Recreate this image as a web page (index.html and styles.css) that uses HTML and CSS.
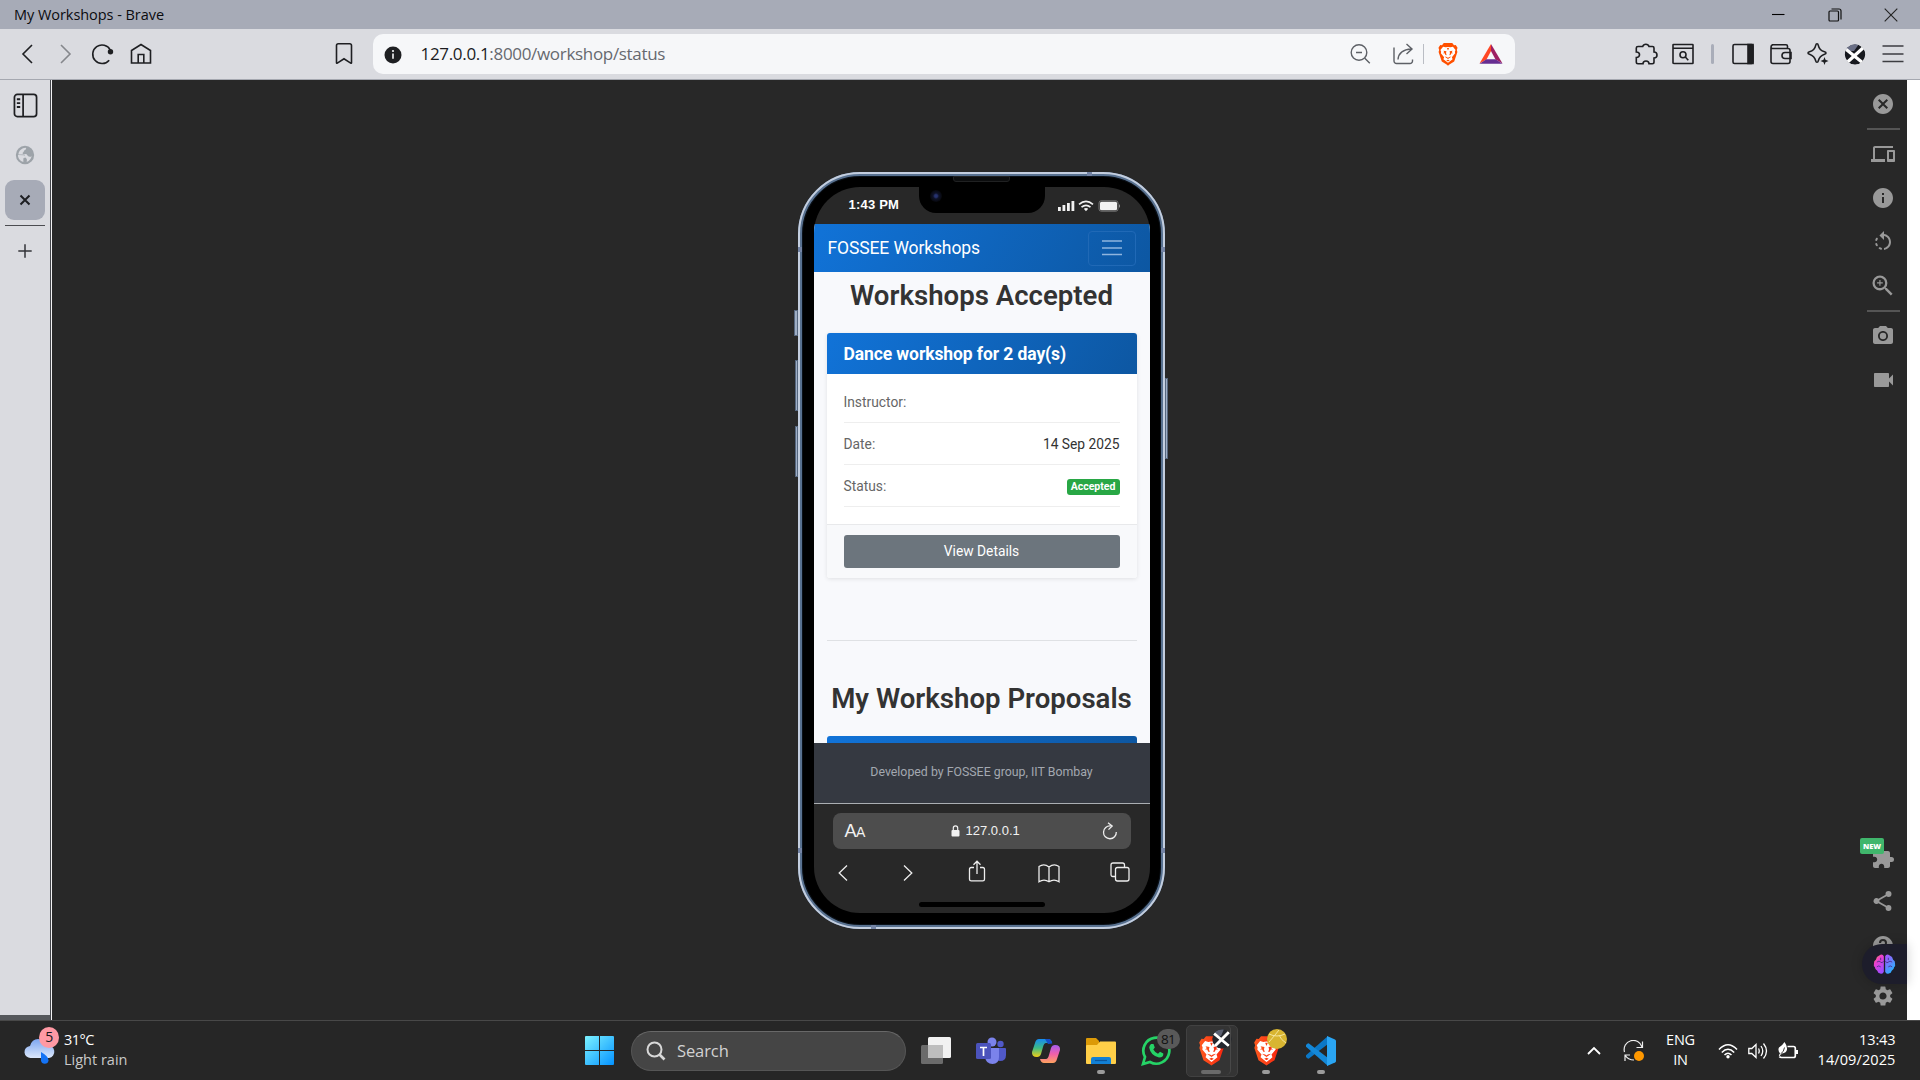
FILE: index.html
```html
<!DOCTYPE html>
<html lang="en">
<head>
<meta charset="utf-8">
<title>My Workshops - Brave</title>
<link rel="stylesheet" href="styles.css">
</head>
<body>
<svg class="defs" width="0" height="0" aria-hidden="true">
  <defs>
    <linearGradient id="orange" x1="0" y1="0" x2="1" y2="0"><stop offset="0" stop-color="#ff5a1f"/><stop offset="1" stop-color="#f7260f"/></linearGradient>
    <symbol id="lion" viewBox="0 0 28 34">
      <path d="M8 1.500h12l2.500 3 2.500-.3 2.500 4-1 3 .8 3-4.500 13.500L16 32l-2 1.500L12 32l-6.800-4.300L.7 14.200l.8-3-1-3 2.500-4 2.500.3z"/>
      <path fill="#fff" d="M14 7l3.500.6 3.500-.9 3.700 4.500-1 2.600.4 2.200-4.600 5.500 1 3L14 29.500l-6.500-5 1-3-4.600-5.500.4-2.200-1-2.600L7 6.700l3.500.9z"/>
      <path d="M7.500 12.300l4.300.9-.6 2.300.9 3.200-1.600-.2-1.300-2.700H6.800l2-1.200zM20.500 12.300l-4.300.9.600 2.300-.9 3.200 1.600-.2 1.300-2.700h2.400l-2-1.200zM9 20.500l3.500.8L14 22.500l1.500-1.200 3.500-.8-3 2.200-2 1.500-2-1.500zM11.500 26l2.500-1 2.500 1-2.500 1.700zM12.500 8.500h3L14 12z"/>
    </symbol>
    <clipPath id="disc"><circle cx="12" cy="12.500" r="10.300"/></clipPath>
    <clipPath id="badge"><circle cx="10" cy="10" r="9.800"/></clipPath>
  </defs>
</svg>

<header class="titlebar">
  <span class="window-title">My Workshops - Brave</span>
  <div class="window-buttons">
    <svg width="14" height="14" viewBox="0 0 14 14"><path d="M1 6.500h12.500" stroke="#000" stroke-width="1.100"/></svg>
    <svg width="14" height="14" viewBox="0 0 14 14" fill="none" stroke="#111" stroke-width="1.200"><rect x="1" y="3" width="9.500" height="10" rx="1"/><path d="M3.500 1h7.500a2 2 0 0 1 2 2v8.500"/></svg>
    <svg width="14" height="14" viewBox="0 0 14 14"><path d="M.7.700l12.600 12.600M13.300.700L.7 13.300" stroke="#222" stroke-width="1.100"/></svg>
  </div>
</header>

<nav class="toolbar">
  <svg class="tool back" viewBox="0 0 24 24"><path d="M16 3L7 12l9 9"/></svg>
  <svg class="tool forward" viewBox="0 0 24 24"><path d="M8 3l9 9-9 9"/></svg>
  <svg class="tool reload" viewBox="0 0 24 24"><path d="M19.200 18.200A9.300 9.300 0 1 1 20.300 8"/><circle cx="20.500" cy="9.800" r="2.700" fill="#1e1f22" stroke="none"/></svg>
  <svg class="tool home" viewBox="0 0 24 24"><path d="M2.500 21V8.500L12 2.500l9.500 6V21zM9.200 21v-8.500h5.600V21"/></svg>
  <svg class="tool bookmark" viewBox="0 0 24 24"><path d="M4.500 3.500q0-1.800 1.800-1.800h11.400q1.800 0 1.800 1.800V20.800q0 .8-.8.300L12 16.800l-6.700 4.300q-.8.500-.8-.3z"/></svg>
  <div class="address">
    <svg class="site-info" viewBox="0 0 18 18"><circle cx="9" cy="9" r="8.500" fill="#1e1f22"/><path d="M9 7.500v5.300" stroke="#f6f7f9" stroke-width="1.600"/><circle cx="9" cy="5" r="1.100" fill="#f6f7f9"/></svg>
    <span class="url"><b>127.0.0.1</b>:8000/workshop/status</span>
    <svg class="tool thin zoom" viewBox="0 0 24 24"><circle cx="11" cy="10.500" r="7.800"/><path d="M16.800 16.300l5 5M8 10.500h6"/></svg>
    <svg class="tool thin share" viewBox="0 0 24 24"><path d="M3 5.500V19a2.500 2.500 0 0 0 2.500 2.500H19a2.500 2.500 0 0 0 2.500-2.500v-1.500M7 17.500C7.500 11 11 7.500 20.500 7M15.500 2l5.500 5-5.500 5"/></svg>
    <i class="divider"></i>
    <svg class="shield" viewBox="0 0 28 34"><use href="#lion" fill="#ff5000"/></svg>
    <svg class="bat" viewBox="0 0 24 24"><path fill="#ff4724" d="M12 2L.5 21.500 7.500 17.500 12 9z"/><path fill="#9e1f63" d="M12 2l11.500 19.500-7-4L12 9z"/><path fill="#662d91" d="M.5 21.700h23L16.500 17.300h-9z"/></svg>
  </div>
  <svg class="tool extensions" viewBox="0 0 24 24"><path d="M4 4.500h4.700a3.300 3.300 0 0 1 6.300 0h3.500q1.500 0 1.500 1.500v4a3 3 0 0 1 0 6v4q0 1.700-1.700 1.700H15c0-3.700-6-3.700-6 0H4q-1.700 0-1.700-1.700V15.500c4.300 0 4.300-5.500 0-5.500V6q0-1.500 1.700-1.500z"/></svg>
  <svg class="tool find" viewBox="0 0 24 24"><path d="M3.500 2.500h18q.5 0 .5.500v18q0 .500-.500.500h-18Q2 21.500 2 21V3q0-.5.500-.5zM2 6.200h20"/><circle cx="12" cy="12.800" r="3"/><path d="M14.300 15l3 3.200"/></svg>
  <i class="bar"></i>
  <svg class="tool panel" viewBox="0 0 24 24"><rect x="2" y="2.500" width="20" height="19" rx="1.500"/><path d="M17 2.500h5v19h-5z" fill="#1e1f22"/></svg>
  <svg class="tool wallet" viewBox="0 0 24 24"><path d="M2 5.500V19.500q0 2 2 2h15q2 0 2-2V8.500q0-2-2-2H3.500Q2 6.500 2 5t1.500-2.300H17q1.500 0 1.500 1.500v2M22 10.500h-6a3 3 0 0 0-3 3v0a3 3 0 0 0 3 3h6z"/></svg>
  <svg class="tool sparkle" viewBox="0 0 24 24"><path d="M11 1.800q1 0 1.300 1.500 1 5 6.200 6.400 1.500.4 1.500 1.300t-1.500 1.300Q13.500 14 12.300 18.800 12 20.300 11 20.300T9.700 18.800Q8.500 14 3.500 12.300 2 11.900 2 11T3.500 9.700Q8.700 8.300 9.700 3.300 10 1.800 11 1.800z"/><path fill="#1e1f22" stroke="none" d="M18.500 15l1 2.700 3 1.300-3 1.300-1 2.700-1-2.700-3-1.300 3-1.300z"/></svg>
  <svg class="avatar" viewBox="0 0 24 24"><g clip-path="url(#disc)"><circle cx="12" cy="12.500" r="10.300" fill="#17191f"/><path fill="#6a6f86" d="M1 9a10.300 10.300 0 0 1 15-7L11 9z"/><path d="M2 6.500L20 21M20.500 5.500L4 20.500" stroke="#fff" stroke-width="3.200"/></g></svg>
  <svg class="tool menu" viewBox="0 0 24 24"><path d="M1.500 4h21M1.500 12h21M1.500 19.500h21"/></svg>
</nav>

<div class="workspace">
  <aside class="tabs">
    <svg class="tabs-toggle" viewBox="0 0 26 26" fill="none" stroke="#1e1f22" stroke-width="1.800"><rect x="1.500" y="1.500" width="23" height="23" rx="3"/><path d="M10.500 1.500v23"/><path d="M4 6.500h3.500M4 10.500h3.500M4 14.500h3.500" stroke-width="2"/></svg>
    <svg class="globe" viewBox="0 0 24 24"><path fill="#9da3a9" d="M12 1a11 11 0 1 0 0 22 11 11 0 0 0 0-22zM3.500 12l7 .3q2 .3 1.500 2.200 0 1.500-2 1.500v4.500Q3.500 18.500 3.500 12zM9.500 4q2-.8 4-.5-.5 2.500-2.500 3-.5 2-2 3 0 1.500 2.500 1.500 2.500-.5 3.500 1.500 1.500 2 4 1.500l1-1q-.8 5.500-6 7.300 1-3-.5-4.500-2-.5-1.500-3-.5-1.500-2.500-1.300H4Q4.500 6.500 9.500 4z" fill-rule="evenodd"/></svg>
    <div class="tab-active"><svg viewBox="0 0 12 12"><path d="M1.500 1.500l9 9M10.500 1.500l-9 9" stroke="#1e1f22" stroke-width="2"/></svg></div>
    <i class="tabs-line"></i>
    <svg class="new-tab" viewBox="0 0 14 14"><path d="M7 .3v13.400M.3 7h13.400" stroke="#333438" stroke-width="1.500"/></svg>
    <i class="tabs-end"></i>
  </aside>

  <main class="stage">
    <div class="phone">
      <i class="key mute"></i><i class="key vol-up"></i><i class="key vol-down"></i><i class="key power"></i>
      <i class="antenna top"></i><i class="antenna bottom"></i><i class="antenna l1"></i><i class="antenna r1"></i><i class="antenna l2"></i><i class="antenna r2"></i>
      <i class="speaker"></i>
      <div class="screen">
        <div class="notch"><i class="lens"></i></div>
        <div class="status">
          <span>1:43 PM</span>
          <svg width="63" height="12" viewBox="0 0 63 12"><g fill="#f2f2f2"><rect y="7" width="2.800" height="4"/><rect x="4.500" y="5" width="2.800" height="6"/><rect x="9" y="3" width="2.800" height="8"/><rect x="13.500" y="1" width="2.800" height="10"/><rect x="42" y="1.800" width="17" height="8.400" rx="1.500"/><path d="M61 4q2 2 0 4z" fill="#999"/></g><g fill="none" stroke="#f2f2f2" stroke-width="1.700"><path d="M21 4.300q7-5.800 14 0M23.500 7.200q4.500-3.500 9 0"/></g><path d="M25.800 8.800q2.200-1.600 4.400 0L28 11.200z" fill="#f2f2f2"/><rect x="41" y=".8" width="19" height="10.400" rx="2.200" fill="none" stroke="#888" stroke-width=".8"/></svg>
        </div>
        <div class="site">
          <div class="navbar">
            <span class="brand">FOSSEE Workshops</span>
            <div class="toggler"><svg width="22" height="18" viewBox="0 0 22 18"><path d="M1 2h20M1 9h20M1 15.500h20" stroke="#8fb5de" stroke-width="1.700"/></svg></div>
          </div>
          <h2 class="accepted">Workshops Accepted</h2>
          <section class="card">
            <h3>Dance workshop for 2 day(s)</h3>
            <dl>
              <div><dt>Instructor:</dt><dd></dd></div>
              <div><dt>Date:</dt><dd>14 Sep 2025</dd></div>
              <div><dt>Status:</dt><dd><span class="pill">Accepted</span></dd></div>
            </dl>
            <div class="card-foot"><span class="button">View Details</span></div>
          </section>
          <hr>
          <h2 class="proposals">My Workshop Proposals</h2>
          <div class="next-card"></div>
        </div>
        <footer class="site-foot">Developed by FOSSEE group, IIT Bombay</footer>
        <div class="safari">
          <div class="safari-address">
            <span class="aa">A<small>A</small></span>
            <span class="host"><svg width="9" height="12" viewBox="0 0 9 12"><rect x=".5" y="5" width="8" height="6.500" rx="1" fill="#f2f2f2"/><path d="M2.300 5.500V3a2.200 2.200 0 0 1 4.400 0v2.500" fill="none" stroke="#f2f2f2" stroke-width="1.200"/></svg>127.0.0.1</span>
            <svg class="refresh" width="16" height="18" viewBox="0 0 16 18" fill="none" stroke="#eee" stroke-width="1.300"><path d="M8.500 4A6.400 6.400 0 1 0 14.300 10M6 .8l4.200 3.200L6.500 7.600"/></svg>
          </div>
          <div class="safari-tools">
            <svg width="10" height="18" viewBox="0 0 10 18"><path d="M9 1.500L1.200 9 9 16.500"/></svg>
            <svg width="10" height="18" viewBox="0 0 10 18"><path d="M1 1.500L8.800 9 1 16.500"/></svg>
            <svg width="18" height="22" viewBox="0 0 18 22"><path d="M6 7.500H3.200Q1.500 7.500 1.500 9.200v10q0 1.700 1.700 1.700h11.600q1.700 0 1.700-1.700v-10q0-1.700-1.700-1.700H12M9 14V1.200M5.500 4.700L9 1.200l3.500 3.500"/></svg>
            <svg width="22" height="19" viewBox="0 0 22 19"><path d="M11 3Q6-1 1 2.500v15.300Q6 14.500 11 17.800q5-3.300 10 0V2.500Q16-1 11 3zM11 3v14.800"/></svg>
            <svg width="20" height="20" viewBox="0 0 20 20"><rect x="5.500" y="5.500" width="13.500" height="13.500" rx="2"/><path d="M5.500 14.500H3q-2 0-2-2V3q0-2 2-2h9.500q2 0 2 2v2.500"/></svg>
          </div>
          <i class="home-bar"></i>
        </div>
      </div>
    </div>
  </main>

  <aside class="rail">
    <svg viewBox="0 0 24 24"><path d="M12 2C6.470 2 2 6.470 2 12s4.470 10 10 10 10-4.470 10-10S17.530 2 12 2zm5 13.590L15.590 17 12 13.410 8.410 17 7 15.590 10.590 12 7 8.410 8.410 7 12 10.590 15.590 7 17 8.410 13.410 12 17 15.590z"/></svg>
    <i class="rail-line first"></i>
    <svg viewBox="0 0 24 24"><path d="M4 6h18V4H4c-1.100 0-2 .9-2 2v11H0v3h14v-3H4V6zm19 2h-6c-.55 0-1 .45-1 1v10c0 .55.450 1 1 1h6c.55 0 1-.450 1-1V9c0-.55-.450-1-1-1zm-1 9h-4v-7h4v7z"/></svg>
    <svg class="spaced" viewBox="0 0 24 24"><path d="M12 2C6.480 2 2 6.480 2 12s4.480 10 10 10 10-4.480 10-10S17.520 2 12 2zm1 15h-2v-6h2v6zm0-8h-2V7h2v2z"/></svg>
    <svg class="spaced" viewBox="0 0 24 24"><path d="M6.560 7.980C6.100 7.520 5.310 7.600 5 8.170c-.28.510-.5 1.030-.67 1.580-.190.630.31 1.250.96 1.250h.01c.43 0 .820-.280.940-.7.120-.4.280-.790.480-1.170.220-.370.150-.840-.160-1.150zM5.310 13h-.02c-.65 0-1.150.620-.960 1.250.16.540.380 1.070.660 1.580.310.570 1.110.660 1.570.2.300-.310.380-.770.170-1.150-.2-.370-.360-.760-.480-1.160-.130-.430-.510-.720-.940-.720zm2.850 6.020c.51.280 1.040.5 1.590.66.620.18 1.240-.320 1.240-.960v-.03c0-.430-.280-.820-.7-.940-.4-.120-.780-.280-1.150-.480-.370-.210-.840-.140-1.140.170l-.03.030c-.45.450-.36 1.240.190 1.550zM13 4.070V1L8.450 5.550 13 10V6.090c2.840.480 5 2.940 5 5.910s-2.160 5.430-5 5.910v2.020c3.950-.490 7-3.850 7-7.930s-3.050-7.440-7-7.930z"/></svg>
    <svg class="spaced" viewBox="0 0 24 24"><path d="M15.500 14h-.79l-.28-.27A6.470 6.470 0 0 0 16 9.500 6.500 6.500 0 1 0 9.500 16c1.610 0 3.090-.59 4.230-1.570l.27.280v.79l5 4.990L20.490 19l-4.990-5zm-6 0C7.010 14 5 11.990 5 9.500S7.010 5 9.500 5 14 7.010 14 9.500 11.990 14 9.500 14zm.5-7H9v2H7v1h2v2h1v-2h2V9h-2z" transform="translate(-2 -2) scale(1.150)"/></svg>
    <i class="rail-line second"></i>
    <svg viewBox="0 0 24 24"><path fill-rule="evenodd" d="M9 2L7.170 4H4c-1.100 0-2 .9-2 2v12c0 1.100.9 2 2 2h16c1.100 0 2-.9 2-2V6c0-1.100-.9-2-2-2h-3.170L15 2H9zm3 15c-2.760 0-5-2.240-5-5s2.240-5 5-5 5 2.240 5 5-2.240 5-5 5zm0-1.800a3.200 3.200 0 1 0 0-6.400 3.200 3.200 0 0 0 0 6.400z"/></svg>
    <svg class="spaced" viewBox="0 0 24 24"><path d="M18 10.500V6c0-.55-.450-1-1-1H4c-.55 0-1 .45-1 1v12c0 .55.450 1 1 1h13c.55 0 1-.450 1-1v-4.500l4 4v-11l-4 4z"/></svg>
    <div class="addon"><svg viewBox="0 0 24 24"><path d="M20.500 11H19V7c0-1.100-.9-2-2-2h-4V3.500a2.500 2.500 0 0 0-5 0V5H4c-1.100 0-1.990.9-1.990 2v3.800H3.500c1.490 0 2.700 1.210 2.700 2.700s-1.210 2.700-2.700 2.700H2V20c0 1.100.9 2 2 2h3.800v-1.500c0-1.490 1.210-2.700 2.700-2.700s2.700 1.210 2.700 2.700V22H17c1.100 0 2-.9 2-2v-4h1.500a2.500 2.500 0 0 0 0-5z"/></svg><span class="new">NEW</span></div>
    <svg class="share-link" viewBox="0 0 24 24"><path d="M18 16.080c-.76 0-1.440.3-1.960.77L8.910 12.700c.05-.23.090-.46.090-.7s-.04-.47-.09-.7l7.050-4.110c.54.5 1.250.81 2.040.81a3 3 0 1 0-3-3c0 .24.040.47.090.7L8.040 9.810A3 3 0 1 0 6 15c.79 0 1.500-.31 2.040-.81l7.120 4.160c-.05.21-.08.430-.08.650a2.920 2.920 0 1 0 2.920-2.920z" transform="translate(-.5)"/></svg>
    <svg class="help" viewBox="0 0 24 24"><path d="M12 2C6.480 2 2 6.480 2 12s4.480 10 10 10 10-4.480 10-10S17.520 2 12 2zm1 17h-2v-2h2v2zm2.070-7.750l-.9.920C13.450 12.900 13 13.500 13 15h-2v-.5c0-1.100.450-2.100 1.170-2.830l1.240-1.260c.370-.360.590-.860.590-1.410a2 2 0 0 0-4 0H8a4 4 0 0 1 8 0c0 .88-.360 1.680-.930 2.250z"/></svg>
    <svg class="gear" viewBox="0 0 24 24"><path d="M19.140 12.940c.04-.3.060-.61.060-.94 0-.320-.020-.640-.070-.940l2.030-1.580a.49.49 0 0 0 .120-.610l-1.920-3.320a.488.488 0 0 0-.590-.220l-2.390.960c-.5-.380-1.030-.7-1.620-.940l-.360-2.540a.484.484 0 0 0-.480-.410h-3.840c-.24 0-.430.170-.470.410l-.36 2.540c-.590.240-1.130.570-1.620.940l-2.390-.960c-.220-.080-.470 0-.590.220L2.740 8.870c-.120.210-.080.470.120.610l2.030 1.580c-.050.300-.09.630-.09.940s.020.640.070.940l-2.030 1.580a.49.49 0 0 0-.120.610l1.920 3.320c.120.220.370.290.590.220l2.390-.960c.5.380 1.030.7 1.620.940l.360 2.540c.050.240.240.410.480.410h3.840c.24 0 .440-.170.470-.410l.360-2.540c.590-.240 1.130-.560 1.620-.940l2.390.960c.220.080.470 0 .590-.220l1.920-3.320c.120-.220.070-.470-.120-.610l-2.010-1.580zM12 15.600A3.610 3.610 0 0 1 8.400 12c0-1.980 1.620-3.600 3.600-3.600s3.600 1.620 3.600 3.600-1.620 3.600-3.600 3.600z"/></svg>
    <div class="brain"><svg viewBox="0 0 24 22"><defs><linearGradient id="bl" x1="0" y1="0" x2=".6" y2="1"><stop offset="0" stop-color="#ff9a2e"/><stop offset=".4" stop-color="#ec3fd0"/><stop offset="1" stop-color="#a04bff"/></linearGradient><linearGradient id="br" x1="0" y1="0" x2=".6" y2="1"><stop offset="0" stop-color="#b04bff"/><stop offset="1" stop-color="#24b4ff"/></linearGradient></defs><path fill="url(#bl)" d="M11.300 3v16q-1 3-3.800 2-2.500-.5-3-3-2.500-1-2.500-3.500Q.3 13 1 10.500q-.3-3 2-4Q3.500 3 6.500 2q3.500-2 4.800 1z"/><path fill="url(#br)" d="M12.700 3v16q1 3 3.800 2 2.500-.5 3-3 2.500-1 2.500-3.500 1.700-1.500 1-4 .3-3-2-4Q20.500 3 17.500 2q-3.500-2-4.800 1z"/><path d="M4 9q2.500-2 4 0t3-1M4 14q2-2 4 0M8 4.500v2.500M20 9q-2.500-2-4 0t-3-1M20 14q-2-2-4 0M16 4.500v2.500" fill="none" stroke="#4b2d86" stroke-width=".9"/></svg></div>
  </aside>
</div>

<footer class="taskbar">
  <div class="weather">
    <div class="cloud"><svg width="32" height="28" viewBox="0 0 32 28"><defs><linearGradient id="cl" x1="0" y1="0" x2="0" y2="1"><stop offset="0" stop-color="#7da6f0"/><stop offset="1" stop-color="#dbe7fb"/></linearGradient></defs><path fill="url(#cl)" d="M7 21a6 6 0 0 1-1-12Q8 2 14 2t9 6.500A6.300 6.300 0 0 1 25 21z"/><path fill="#1473f5" d="M17 15q8 4.500 7.500 8.500a3.800 3.800 0 0 1-7.500 0z"/></svg><span class="count">5</span></div>
    <p><span>31°C</span><em>Light rain</em></p>
  </div>
  <svg class="windows" viewBox="0 0 29 29"><defs><linearGradient id="w" gradientUnits="userSpaceOnUse" x1="0" y1="0" x2="29" y2="29"><stop offset="0" stop-color="#7cf2ff"/><stop offset="1" stop-color="#0492ff"/></linearGradient></defs><path fill="url(#w)" d="M1 0h13v14H0V1q0-1 1-1zM15 0h13q1 0 1 1v13H15zM0 15h14v14H1q-1 0-1-1zM15 15h14v13q0 1-1 1H15z"/></svg>
  <div class="search"><svg width="20" height="20" viewBox="0 0 20 20" fill="none" stroke="#d8d8d8" stroke-width="2"><circle cx="8.500" cy="8.500" r="7"/><path d="M13.500 13.500l5 5" stroke-width="2.600"/></svg><span>Search</span></div>
  <div class="apps">
    <div class="app"><svg viewBox="0 0 30 30"><rect x="0" y="9" width="22" height="19" rx="1.500" fill="#6b6b6b"/><rect x="7" y="1" width="23" height="21" rx="1.500" fill="#f1f1f1"/><path d="M7 9h15v13H8.500Q7 22 7 20.500z" fill="#bdbdbd"/></svg></div>
    <div class="app"><svg viewBox="0 0 30 30"><circle cx="16" cy="6" r="4.500" fill="#7b83eb"/><circle cx="24.500" cy="8" r="3.200" fill="#5059c9"/><path fill="#5059c9" d="M20 12h9q1 0 1 1v6q0 6-6 6-3 0-4-3z"/><path fill="#7b83eb" d="M10 12h13v9q0 7-6.500 7T9 21z"/><rect y="7" width="15" height="16" rx="1.500" fill="#4b53bc"/><path d="M4 11.500h7M7.500 11.500V20" stroke="#fff" stroke-width="1.700"/></svg></div>
    <div class="app"><svg viewBox="0 0 30 30"><defs><linearGradient id="c1" x1="0" y1="0" x2="0" y2="1"><stop offset="0" stop-color="#168bf0"/><stop offset=".5" stop-color="#3dbb85"/><stop offset="1" stop-color="#f2cf16"/></linearGradient><linearGradient id="c2" x1="0" y1="0" x2="0" y2="1"><stop offset="0" stop-color="#a45cf0"/><stop offset=".5" stop-color="#f05faa"/><stop offset="1" stop-color="#ffa25e"/></linearGradient></defs><path fill="url(#c1)" d="M8 3h9q3 0 4 4H15q-2 0-3 4l-2 7q-1 3-4 3Q.5 21 1 16l3-9q1-4 4-4z"/><path fill="#1550c8" d="M14 3h4q2.500 0 3.300 4.500L17 8z"/><path fill="url(#c2)" d="M22 27h-9q-3 0-4-4h6q2 0 3-4l2-7q1-3 4-3 5.500 0 5 5l-3 9q-1 4-4 4z"/></svg></div>
    <div class="app"><svg viewBox="0 0 30 30"><path fill="#dc9a07" d="M0 3q0-1 1-1h9l3 3v5H0z"/><path fill="#ffcf48" d="M1 9h10l3-3.500h15q1 0 1 1V27q0 1-1 1H1q-1 0-1-1V10q0-1 1-1z"/><path fill="#1280d5" d="M5 28v-5q0-2 2-2h16q2 0 2 2v5z"/><path d="M9 24.500h12" stroke="#0b559b" stroke-width="1.200"/></svg><i class="running"></i></div>
    <div class="app"><svg viewBox="0 0 30 30"><path d="M2 28l2-7A13 13 0 1 1 9 26z" fill="none" stroke="#25d366" stroke-width="2.700"/><path fill="#25d366" d="M10 8h2.500l1.300 3.500-1.500 2q1.700 3 4.700 4.300l2-2 3.300 1.700q.5 4-4.300 4Q9.500 19.500 8.200 11.500 8.500 9 10 8z"/></svg><span class="messages">81</span></div>
    <div class="app current"><svg class="brave-app" viewBox="0 0 28 34"><use href="#lion" fill="url(#orange)"/></svg><svg class="profile" viewBox="0 0 20 20"><g clip-path="url(#badge)"><circle cx="10" cy="10" r="10" fill="#22262e"/><path fill="#5a6072" d="M0 6Q4 0 12 0L9 7z"/><path d="M2 4.500L17 17M17 3L3 17" stroke="#fff" stroke-width="2.900"/></g></svg><i class="running wide"></i></div>
    <div class="app"><svg class="brave-app" viewBox="0 0 28 34"><use href="#lion" fill="url(#orange)"/></svg><svg class="profile" viewBox="0 0 20 20"><circle cx="10" cy="10" r="10" fill="#d8b531"/><path d="M2 5q8 4 16 0M12 6q2 5 7 8M12 1q-3 4-10 12" fill="none" stroke="#f4e49b" stroke-width="1"/></svg><i class="running"></i></div>
    <div class="app"><svg viewBox="0 0 30 30"><path fill="#0b77c6" d="M22 0v8L3 22.500q-1 .5-2-.5l-1-1q-.7-1 .3-2z"/><path fill="#1488d8" d="M22 30v-8L3 7.500Q2 7 1 8L0 9q-.7 1 .3 2z"/><path fill="#2aa5f3" d="M21 30V0l8 3.500q1 .5 1 1.500v20q0 1-1 1.500z"/></svg><i class="running"></i></div>
  </div>
  <div class="tray">
    <svg class="chevron" width="14" height="9" viewBox="0 0 14 9"><path d="M1 8l6-6 6 6" stroke="#fff" stroke-width="1.800" fill="none"/></svg>
    <svg class="sync" width="22" height="22" viewBox="0 0 22 22" fill="none" stroke="#eee" stroke-width="1.200"><path d="M1.500 12A9 9 0 0 1 19 7M19.500 1.500v6h-6M7 15H2v6M2 15q3 5 9 5"/><circle cx="16" cy="16" r="5" fill="#ff9800" stroke="none"/></svg>
    <p class="lang"><span>ENG</span><span>IN</span></p>
    <svg class="wifi" width="20" height="16" viewBox="0 0 20 16" fill="none" stroke="#fff" stroke-width="1.500"><path d="M1 6.500q9-9.500 18 0M3.800 9.500q6.200-6.500 12.400 0M6.500 12q3.500-3.500 7 0"/><circle cx="10" cy="13.700" r="1.700" fill="#fff" stroke="none"/></svg>
    <svg class="volume" width="20" height="18" viewBox="0 0 20 18" fill="none" stroke="#fff" stroke-width="1.300"><path d="M.8 6.500h3L8 2.500v13l-4.200-4h-3zM10.500 6.500q1.500 2.500 0 5M13 4q3.500 5 0 10M15.500 1.500q6 7.500 0 15"/></svg>
    <svg class="battery" width="20" height="18" viewBox="0 0 20 18"><path d="M9.500 4.500h6q1.800 0 1.800 1.800v7.400q0 1.800-1.800 1.800H3.500q-1.500 0-2-1" fill="none" stroke="#fff" stroke-width="1.700"/><path d="M18 8h2v4h-2z" fill="#fff"/><path fill="#fff" d="M6.500 0q3 4 2.500 7.500-.5 3.500-5 4L1 14.500q-.5-1.500 1-3Q-.5 8 1 5.500q3-1.500 5.500-5.500z"/><path d="M2.500 12q3.500-2 4-6.500" fill="none" stroke="#262626" stroke-width=".9"/></svg>
    <p class="clock"><span>13:43</span><span>14/09/2025</span></p>
  </div>
</footer>
</body>
</html>
```
FILE: styles.css
```css
* { box-sizing: border-box; }
body { margin: 0; width: 1920px; height: 1080px; overflow: hidden; display: flex; flex-direction: column; background: #262626; font-family: "Open Sans", "Noto Sans", sans-serif; }
svg { display: block; flex: none; }
i { display: block; flex: none; }
p, h2, h3, dl, dd, hr { margin: 0; }
.defs { position: absolute; }

/* Window title */
.titlebar { flex: none; height: 29px; background: #a7abb7; display: flex; justify-content: space-between; align-items: center; padding: 0 22px 0 14px; }
.window-title { font-size: 14.500px; letter-spacing: -0.050px; color: #0b0c0f; white-space: nowrap; }
.window-buttons { display: flex; gap: 42.500px; }

/* Browser toolbar */
.toolbar { flex: none; height: 51px; background: #dadbe0; border-bottom: 1px solid #a5a8b0; display: flex; align-items: center; padding-left: 16px; }
.tool { width: 24px; height: 24px; fill: none; stroke: #1e1f22; stroke-width: 1.600; }
.forward { margin-left: 13px; stroke: #85878c; }
.reload { margin-left: 13px; }
.home { margin-left: 14.500px; }
.bookmark { margin-left: 179px; }
.address { margin-left: 17.500px; width: 1142px; height: 40px; background: #f6f7f9; border-radius: 10px; display: flex; align-items: center; padding-left: 11px; }
.site-info { width: 18px; height: 18px; margin-top: 2px; }
.url { margin: -2px 0 0 18.500px; width: 927.500px; font-size: 17px; letter-spacing: -0.32px; color: #66696f; white-space: nowrap; }
.url b { font-weight: 400; color: #1b1c1f; }
.thin { stroke: #5d6066; stroke-width: 1.400; }
.share { margin-left: 19px; }
.divider { width: 1px; height: 20px; margin-left: 8px; background: #babdc4; }
.shield { width: 22px; height: 24px; margin-left: 13px; }
.bat { width: 24px; height: 24px; margin-left: 20px; }
.extensions { margin-left: 119px; }
.find { margin-left: 12.500px; }
.bar { width: 3px; height: 20px; margin-left: 16.500px; border-radius: 2px; background: #a9adb9; }
.panel { margin-left: 16.500px; }
.wallet { margin-left: 14px; }
.sparkle { margin-left: 13.500px; }
.avatar { width: 24px; height: 24px; margin-left: 13px; }
.menu { margin-left: 13.500px; stroke: #3c3d41; }

.workspace { flex: none; height: 940px; display: flex; background: #282828; border-right: 13px solid #fff; }

/* Vertical tab strip */
.tabs { flex: none; width: 52px; background: #dadbe0; border-right: 1px solid #f2f2f4; display: flex; flex-direction: column; align-items: center; padding: 13px 1px 0 0; box-shadow: inset -1px 0 #44464b; }
.tabs-toggle { width: 25px; height: 25px; }
.globe { width: 20px; height: 20px; margin-top: 27px; }
.tab-active { width: 40px; height: 40px; margin-top: 15px; border-radius: 9px; background: #a7abb7; display: grid; place-items: center; }
.tab-active svg { width: 12px; height: 12px; }
.tabs-line { width: 40px; height: 1px; margin-top: 5px; background: #4b4c51; }
.new-tab { width: 14px; height: 14px; margin-top: 18px; }
.tabs-end { align-self: stretch; height: 5px; margin-top: auto; background: #55585c; }

/* Phone */
.stage { flex: 1; padding: 92px 0 0 746px; }
.phone { position: relative; width: 367px; height: 757px; padding: 11px 11.500px 12px; border: 4px solid #587190; border-radius: 62px; background: #000; box-shadow: inset 0 0 0 1px #0a1119; }
.phone::before { content: ""; position: absolute; inset: -4px; border: 2px solid #c3cedf; border-radius: 62px; }
.key { position: absolute; background: #9dadc4; border: 1px solid #56677f; }
.mute { left: -8px; top: 134px; width: 4px; height: 26px; }
.vol-up { left: -7px; top: 184px; width: 3px; height: 51px; }
.vol-down { left: -7px; top: 250px; width: 3px; height: 51px; }
.power { right: -7px; top: 202px; width: 3px; height: 81px; }
.antenna { position: absolute; z-index: 1; width: 4px; height: 5px; background: #7484a5; }
.antenna.top { right: 69px; top: -4px; width: 5px; height: 4px; }
.antenna.bottom { left: 69px; bottom: -4px; width: 5px; height: 4px; }
.l1 { left: -4px; top: 71px; } .r1 { right: -4px; top: 71px; }
.l2 { left: -4px; top: 672px; } .r2 { right: -4px; top: 672px; }
.speaker { position: absolute; left: 151px; top: 0; width: 57px; height: 6px; border-radius: 0 0 3px 3px; background: #0c0d0e; border: 1px solid #202122; }
.screen { position: relative; width: 336px; height: 726px; border-radius: 46px; overflow: hidden; background: #282828; display: flex; flex-direction: column; font-family: Roboto, sans-serif; }
.notch { position: absolute; left: 105px; top: -1px; width: 126px; height: 27px; border-radius: 0 0 17px 17px; background: #000; }
.lens { width: 12px; height: 12px; margin: 4px 0 0 11px; border-radius: 50%; background: radial-gradient(#26326f 0 15%, #0e1228 35%, #06070c 70%); }
.status { flex: none; height: 37px; display: flex; justify-content: space-between; padding: 10px 28.500px 0 35px; color: #fff; font: bold 13px/15px "Liberation Sans", sans-serif; }
.status span { letter-spacing: 0.2px; }
.status svg { margin-top: 2.500px; }

/* Site */
.site { flex: none; height: 519px; background: #f8f9fc; overflow: hidden; }
.navbar { height: 48px; display: flex; align-items: center; justify-content: space-between; padding: 0 14px; background: linear-gradient(120deg, #1173d8, #0d57a2); }
.brand { color: #fff; font-size: 17.500px; letter-spacing: -0.12px; }
.toggler { width: 48px; height: 35px; border: 1px solid #2069b6; border-radius: 4px; display: grid; place-items: center; }
h2 { text-align: center; color: #333; font-weight: 600; font-size: 27.600px; line-height: 34px; white-space: nowrap; }
.accepted { margin-top: 7px; }
.card { width: 310px; height: 245.500px; margin: 19.500px auto 0; border-radius: 3px; overflow: hidden; background: #fff; box-shadow: 0 1px 4px rgba(0, 0, 0, .1); }
h3 { height: 41.500px; padding-left: 17px; background: linear-gradient(120deg, #1173d8, #0d57a2); color: #fff; font-size: 17.500px; line-height: 42px; font-weight: 700; letter-spacing: -0.1px; }
dl { height: 150px; padding: 6.500px 17px 0; font-size: 13.800px; color: #333; }
dl div { height: 42px; display: flex; justify-content: space-between; align-items: center; border-bottom: 1px solid #eee; padding-top: 1px; }
dt { color: #666; }
.pill { display: block; width: 53px; height: 16px; margin-top: 2px; border-radius: 3px; background: #28a745; color: #fff; font-size: 10.500px; line-height: 16px; font-weight: 700; text-align: center; }
.card-foot { height: 54px; padding: 10px 17px; border-top: 1px solid #e8e9eb; background: #f8f9fb; }
.button { display: block; height: 33px; border-radius: 3px; background: #6c757d; color: #fff; font-size: 13.800px; line-height: 33px; text-align: center; }
hr { width: 310px; margin: 62px auto 0; border: 0; border-top: 1px solid #dfe1e4; }
.proposals { margin-top: 41px; }
.next-card { width: 310px; height: 40px; margin: 20px auto 0; border-radius: 3px; background: linear-gradient(90deg, #1173d8, #0d57a2); }
.site-foot { flex: none; height: 61px; color: #a3a8b0; border-bottom: 1px solid #aaaeb2; font-size: 12.350px; line-height: 59px; text-align: center; background: #353941; }

/* Mobile browser controls */
.safari { position: relative; flex: 1; padding: 9px 19px 0; }
.safari-address { height: 36px; border-radius: 8px; background: #4d4d4d; display: flex; justify-content: space-between; align-items: center; padding: 0 12px; color: #f2f2f2; font: 13px "Liberation Sans", sans-serif; }
.aa { font-size: 18px; letter-spacing: -0.5px; } .aa small { font-size: 14px; }
.host { display: flex; align-items: center; gap: 6px; margin: -1px 0 0 3px; }
.refresh { margin-top: -1px; }
.safari-tools { height: 26px; margin: 11px 2px 0 5px; display: flex; align-items: center; }
.safari-tools svg { fill: none; stroke: #ededed; stroke-width: 1.300; }
.safari-tools svg:nth-child(2) { margin-left: 55px; }
.safari-tools svg:nth-child(3) { margin: -4px 0 0 55px; }
.safari-tools svg:nth-child(4) { margin-left: 52px; }
.safari-tools svg:nth-child(5) { margin: -2px 0 0 50px; }
.home-bar { position: absolute; left: 105px; bottom: 6px; width: 126px; height: 5px; border-radius: 3px; background: #000; }

/* Simulator tools */
.rail { position: relative; flex: none; width: 47px; display: flex; flex-direction: column; align-items: center; padding: 12px 1px 12px 0; fill: #999; }
.rail > svg, .addon svg { width: 24px; height: 24px; }
.rail-line { width: 33px; height: 2px; background: #555; }
.rail-line.first { margin: 12px 0 11.500px; }
.rail-line.second { margin: 12.500px 0 12px; }
.rail .spaced { margin-top: 20px; }
.addon { position: relative; margin-top: auto; }
.new { position: absolute; left: -11px; top: -8px; width: 24px; height: 16px; border-radius: 2px; background: #40b66c; color: #fff; font: 800 7.500px/16px "Open Sans", sans-serif; text-align: center; }
.share-link { margin-top: 19px; }
.help { margin-top: 20.500px; }
.gear { margin-top: 26.500px; }
.brain { position: absolute; right: 0; bottom: 36px; width: 45px; height: 40px; border-radius: 20px 0 0 20px; background: #1d1d2b; box-shadow: 0 0 12px rgba(0, 0, 0, .2); padding: 9px 0 0 11px; }
.brain svg { width: 23px; height: 22px; }

/* Taskbar */
.taskbar { flex: 1; display: flex; align-items: center; border-top: 1px solid #484848; background: #262626; color: #fff; font-size: 14.500px; line-height: 20px; }
.taskbar p { display: flex; flex-direction: column; white-space: nowrap; margin-top: -2px; }
.weather { width: 585px; padding-left: 24px; display: flex; align-items: center; }
.cloud { position: relative; margin-right: 8px; }
.count { position: absolute; left: 15px; top: -10px; width: 20px; height: 21px; border-radius: 50%; background: #ff99a4; color: #16181c; font-size: 14px; text-align: center; }
.weather span { letter-spacing: -0.5px; }
.weather em { font-style: normal; letter-spacing: 0; color: #c9c9c9; }
.windows { width: 29px; height: 29px; }
.search { width: 275px; height: 40px; margin-left: 17px; border-radius: 20px; background: #454545; border: 1px solid #555; border-top-color: #686868; display: flex; align-items: center; gap: 11px; padding-left: 14px; font-size: 16.500px; letter-spacing: -0.1px; color: #d2d2d2; }
.apps { display: flex; margin-left: 2.500px; }
.app { position: relative; width: 55px; height: 59px; display: grid; place-items: center; }
.app svg { width: 30px; height: 30px; }
.running { position: absolute; left: 23.500px; bottom: 6px; width: 8px; height: 4px; border-radius: 2px; background: #9b9b9b; }
.running.wide { left: 17.500px; width: 20px; background: #6a6a6a; }
.messages { position: absolute; left: 28px; top: 8px; width: 23px; height: 20px; border-radius: 10px; background: #595959; color: #111; font-size: 13.500px; text-align: center; letter-spacing: -0.8px; }
.current::before { content: ""; position: absolute; left: 2.500px; top: 4px; width: 50px; height: 50px; border-radius: 5px; background: #343434; border: 1px solid #414141; }
.current::after { content: ""; position: absolute; left: 2.500px; top: 4px; width: 44px; height: 50px; border-radius: 5px; border-right: 1px solid #484848; }
.app .brave-app { position: relative; width: 27px; height: 31px; }
.app .profile { position: absolute; left: 28px; top: 8px; width: 20px; height: 20px; }
.tray { margin-left: auto; margin-right: 24.500px; display: flex; align-items: center; }
.sync { margin-left: 22px; }
.lang { width: 40px; margin-left: 16px; align-items: center; letter-spacing: -0.2px; }
.wifi { margin-left: 17px; }
.volume { margin-left: 10px; }
.battery { margin-left: 10px; }
.clock { width: 98px; align-items: flex-end; letter-spacing: 0.1px; }
.clock span:first-child { letter-spacing: -0.1px; }
```
